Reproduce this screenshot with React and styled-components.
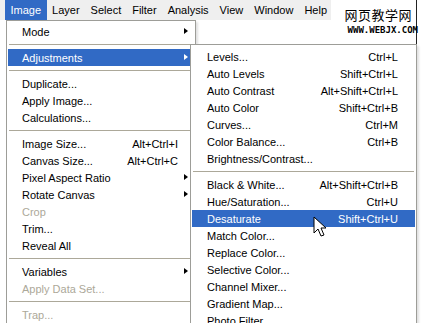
import styled, { createGlobalStyle } from "styled-components";

const GlobalStyle = createGlobalStyle`
  html, body {
    margin: 0;
    padding: 0;
    background: #ffffff;
  }
  body {
    font-family: "Liberation Sans", Arial, sans-serif;
    font-size: 11px;
    color: #000;
  }
`;

const barItems = ["Image", "Layer", "Select", "Filter", "Analysis", "View", "Window", "Help"];

// main "Image" menu
const imageMenu = [
  { label: "Mode", sub: true },
  "-",
  { label: "Adjustments", sub: true, active: true },
  "-",
  { label: "Duplicate..." },
  { label: "Apply Image..." },
  { label: "Calculations..." },
  "-",
  { label: "Image Size...", key: "Alt+Ctrl+I" },
  { label: "Canvas Size...", key: "Alt+Ctrl+C" },
  { label: "Pixel Aspect Ratio", sub: true },
  { label: "Rotate Canvas", sub: true },
  { label: "Crop", disabled: true },
  { label: "Trim..." },
  { label: "Reveal All" },
  "-",
  { label: "Variables", sub: true },
  { label: "Apply Data Set...", disabled: true },
  "-",
  { label: "Trap...", disabled: true },
];

const adjustMenu = [
  { label: "Levels...", key: "Ctrl+L" },
  { label: "Auto Levels", key: "Shift+Ctrl+L" },
  { label: "Auto Contrast", key: "Alt+Shift+Ctrl+L" },
  { label: "Auto Color", key: "Shift+Ctrl+B" },
  { label: "Curves...", key: "Ctrl+M" },
  { label: "Color Balance...", key: "Ctrl+B" },
  { label: "Brightness/Contrast..." },
  "-",
  { label: "Black & White...", key: "Alt+Shift+Ctrl+B" },
  { label: "Hue/Saturation...", key: "Ctrl+U" },
  { label: "Desaturate", key: "Shift+Ctrl+U", active: true },
  { label: "Match Color..." },
  { label: "Replace Color..." },
  { label: "Selective Color..." },
  { label: "Channel Mixer..." },
  { label: "Gradient Map..." },
  { label: "Photo Filter..." },
];

const Page = styled.div`
  position: relative;
  width: 430px;
  height: 323px;
  overflow: hidden;
  background: #ffffff;
`;

const MenuBar = styled.div`
  display: flex;
  align-items: stretch;
  width: 331px;
  height: 20px;
  padding-left: 5px;
  box-sizing: border-box;
  background: #efefef;
`;

const BarItem = styled.div`
  display: flex;
  align-items: center;
  padding: 0 5.5px 1px;
  height: 19px;
  background: ${(p) => (p.$active ? "#316ac5" : "transparent")};
  color: ${(p) => (p.$active ? "#ffffff" : "#000000")};
  font-size: 11px;
`;

const Watermark = styled.div`
  position: absolute;
  top: 0;
  left: 340px;
  width: 76px;
  height: 44px;
  border-right: 1px solid #222;
  display: flex;
  flex-direction: column;
  align-items: flex-end;
`;

const WmTitle = styled.div`
  font-family: "Noto Sans CJK SC", sans-serif;
  font-size: 13px;
  line-height: 16px;
  margin-top: 7px;
  margin-right: 4px;
  letter-spacing: 0.5px;
`;

const WmUrl = styled.div`
  font-family: "DejaVu Sans Mono", monospace;
  font-weight: bold;
  font-size: 9px;
  line-height: 9px;
  margin-top: 3px;
  margin-right: -2px;
`;

const Dropdown = styled.div`
  position: absolute;
  top: ${(p) => p.$top}px;
  left: ${(p) => p.$left}px;
  width: ${(p) => p.$width}px;
  padding: ${(p) => p.$pad}px 1px;
  background: #ffffff;
  border: 1px solid #9d9d98;
  box-shadow: 2px 2px 2px rgba(0, 0, 0, 0.12);
`;

const Row = styled.div`
  display: grid;
  grid-template-columns: 1fr auto 10px;
  align-items: center;
  height: 17px;
  padding: 0 ${(p) => p.$padR}px 0 ${(p) => p.$padL}px;
  background: ${(p) => (p.$active ? "#316ac5" : "transparent")};
  color: ${(p) => (p.$active ? "#ffffff" : p.$disabled ? "#aca899" : "#000000")};
  white-space: nowrap;
`;

const Shortcut = styled.span`
  text-align: right;
`;

const Arrow = styled.span`
  justify-self: end;
  width: 0;
  height: 0;
  margin-bottom: 2px;
  border-top: 3.5px solid transparent;
  border-bottom: 3.5px solid transparent;
  border-left: 4px solid ${(p) => (p.$active ? "#ffffff" : "#000000")};
`;

const Separator = styled.div`
  height: 9px;
  display: flex;
  align-items: center;
  padding: 0 1px;
  &::after {
    content: "";
    flex: 1;
    height: 1px;
    background: #aca899;
  }
`;

const Cursor = styled.svg`
  position: absolute;
  left: 313px;
  top: 216px;
`;

function Menu({ items, padL, padR }) {
  return items.map((it, i) =>
    it === "-" ? (
      <Separator key={i} />
    ) : (
      <Row key={i} $active={it.active} $disabled={it.disabled} $padL={padL} $padR={padR}>
        <span>{it.label}</span>
        <Shortcut>{it.key || ""}</Shortcut>
        {it.sub ? <Arrow $active={it.active} /> : <span />}
      </Row>
    )
  );
}

export default function App() {
  return (
    <>
      <GlobalStyle />
      <Page>
        <MenuBar>
          {barItems.map((b, i) => (
            <BarItem key={b} $active={i === 0}>
              {b}
            </BarItem>
          ))}
        </MenuBar>
        <Watermark>
          <WmTitle>网页教学网</WmTitle>
          <WmUrl>WWW.WEBJX.COM</WmUrl>
        </Watermark>
        <Dropdown $top={20} $left={6} $width={186} $pad={2}>
          <Menu items={imageMenu} padL={14} padR={6} />
        </Dropdown>
        <Dropdown $top={44} $left={190} $width={223} $pad={3}>
          <Menu items={adjustMenu} padL={15} padR={7} />
        </Dropdown>
        <Cursor width="14" height="23" viewBox="0 0 14 23">
          <path
            d="M1 1 L1 17 L5 13 L8 20 L11 19 L8 12 L13 12 Z"
            fill="#ffffff"
            stroke="#000000"
            strokeWidth="1"
            strokeLinejoin="miter"
          />
        </Cursor>
      </Page>
    </>
  );
}
